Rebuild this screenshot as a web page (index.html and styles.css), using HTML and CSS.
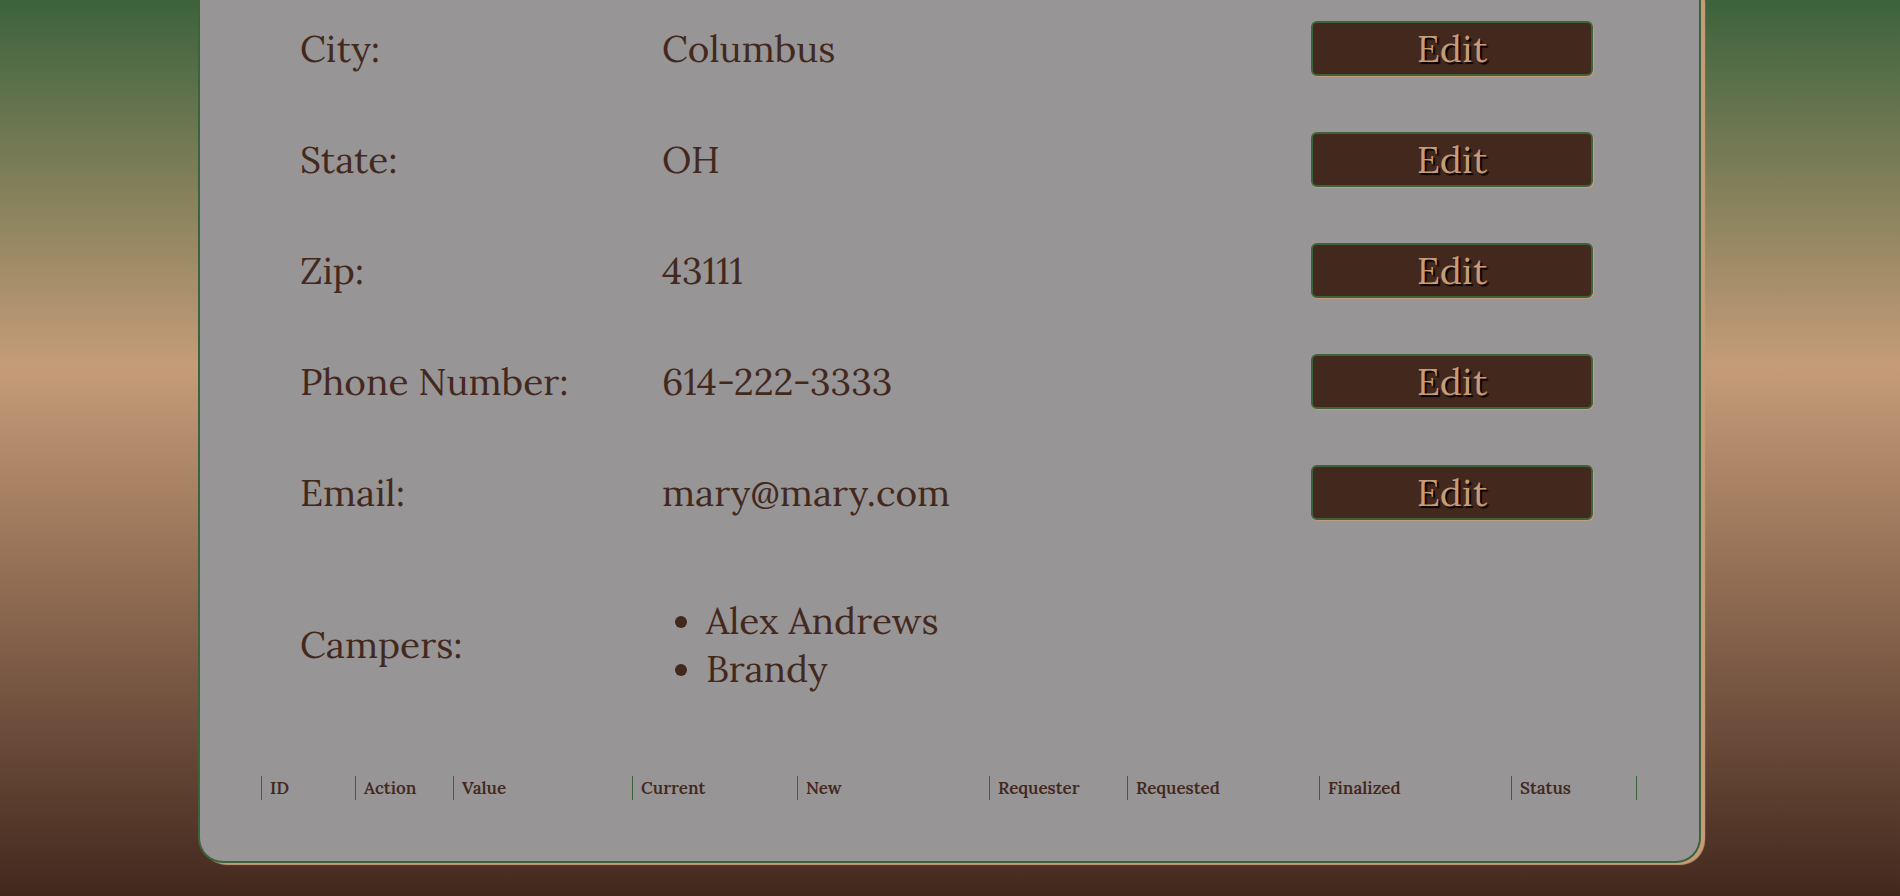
FILE: index.html
```html
<!DOCTYPE html>
<html lang="en">
<head>
<meta charset="utf-8">
<title>Profile</title>
<link rel="stylesheet" href="styles.css">
</head>
<body>
<main class="card">
  <section class="details">
    <div class="row"><span id="city">City:</span><span>Columbus</span><button class="edit" type="button" aria-describedby="city">Edit</button></div>
    <div class="row"><span id="state">State:</span><span>OH</span><button class="edit" type="button" aria-describedby="state">Edit</button></div>
    <div class="row"><span id="zip">Zip:</span><span>43111</span><button class="edit" type="button" aria-describedby="zip">Edit</button></div>
    <div class="row"><span id="phone">Phone Number:</span><span>614-222-3333</span><button class="edit" type="button" aria-describedby="phone">Edit</button></div>
    <div class="row"><span id="email">Email:</span><span>mary@mary.com</span><button class="edit" type="button" aria-describedby="email">Edit</button></div>
    <div class="row campers">
      <span>Campers:</span>
      <ul class="camper-list">
        <li>Alex Andrews</li>
        <li>Brandy</li>
      </ul>
    </div>
  </section>
  <table class="requests">
    <thead>
      <tr>
        <th class="w-id" scope="col">ID</th>
        <th class="w-action" scope="col">Action</th>
        <th class="w-value" scope="col">Value</th>
        <th class="w-current" scope="col">Current</th>
        <th class="w-new" scope="col">New</th>
        <th class="w-requester" scope="col">Requester</th>
        <th class="w-date" scope="col">Requested</th>
        <th class="w-date" scope="col">Finalized</th>
        <th class="w-status" scope="col">Status</th>
      </tr>
    </thead>
  </table>
</main>
</body>
</html>
```
FILE: styles.css
```css
:root {
  --green: #3c633c;
  --tan: #c69c78;
  --brown: #43281e;
  --gray: #979595;
}

* { box-sizing: border-box; }

body {
  margin: 0;
  min-height: 100vh;
  padding: 0 199px 32px 198px;
  background: linear-gradient(var(--green), var(--tan) 41%, var(--brown));
  color: var(--brown);
  font-family: Lora, "Liberation Serif", serif;
}

.card {
  padding: 21px 62px 61px 61px;
  background: var(--gray);
  border: 2px solid var(--green);
  border-top: 0;
  border-radius: 0 0 25px 25px;
  box-shadow: 4px 2px 1px var(--tan), 4px -4px 1px var(--tan);
}

.details {
  display: grid;
  gap: 56px;
  padding: 0 44px 0 39px;
  font-size: 37px;
  line-height: 48px;
}

.row {
  display: grid;
  grid-template-columns: 362px 1fr 282px;
  align-items: center;
}

.edit {
  height: 55px;
  padding: 0;
  background: var(--brown);
  border: 2px solid var(--green);
  border-radius: 6px;
  box-shadow: 1px 1px 1px var(--tan);
  color: var(--tan);
  font: inherit;
  text-shadow: 2px 2px 1px #000;
}

.campers { margin-top: 21px; }

.camper-list {
  margin: 0;
  padding-left: 44px;
}

.requests {
  width: 100%;
  margin-top: 83px;
  table-layout: fixed;
  border-collapse: separate;
  border-spacing: 0;
  border-right: 1px solid var(--green);
  font-size: 17px;
  line-height: 24px;
}

.requests th {
  padding: 0 0 0 8px;
  border-left: 1px solid var(--green);
  font-weight: 600;
  text-align: left;
}

.w-id { width: 94px; }
.w-action { width: 98px; }
.w-value { width: 179px; }
.w-current { width: 165px; }
.w-new { width: 192px; }
.w-requester { width: 138px; }
.w-date { width: 192px; }
.w-status { width: 125px; }
```
